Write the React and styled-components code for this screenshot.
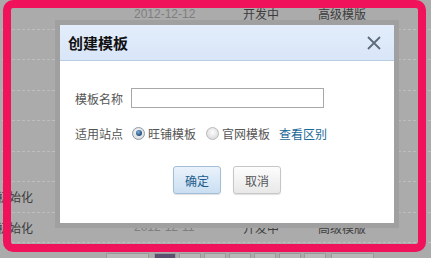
import styled, { createGlobalStyle } from "styled-components";

const GlobalStyle = createGlobalStyle`
  html, body {
    margin: 0;
    padding: 0;
    background: #ababab;
  }
`;

const Page = styled.div`
  position: relative;
  width: 431px;
  height: 258px;
  overflow: hidden;
  background: #ababab;
  font-family: "Liberation Sans", "Noto Sans CJK SC", sans-serif;
  font-size: 12px;
`;

const Table = styled.div`
  margin: -1px 0 0 -8px;
`;

const Row = styled.div`
  display: grid;
  grid-template-columns: 142px 109px 75px 1fr;
  align-items: center;
  height: 29.5px;
  border-bottom: 1px dashed #bebebe;
`;

const Cell = styled.span`
  color: ${({ $light }) => ($light ? "#7e7e7e" : "#3c3c3c")};
  padding-left: ${({ $name }) => ($name ? "5px" : "0")};
  white-space: nowrap;
`;

const Pager = styled.div`
  display: flex;
  gap: 3px;
  margin-top: 10px;
  padding-left: 106px;
`;

const PageItem = styled.span`
  box-sizing: border-box;
  width: ${({ $wide }) => ($wide ? "43px" : "22px")};
  height: 20px;
  border: 1px solid #999;
  background: ${({ $active }) => ($active ? "#5b506f" : "#b8b8b8")};
  margin-left: ${({ $gap }) => ($gap ? "2px" : "0")};
`;

const Mark = styled.div`
  position: absolute;
  left: 3px;
  top: 0;
  width: 423px;
  height: 252px;
  box-sizing: border-box;
  border: 8px solid #f0125a;
  border-radius: 10px;
  pointer-events: none;
`;

const Frame = styled.div`
  position: absolute;
  left: 55px;
  top: 20px;
  padding: 5px;
  background: #a0a0a0;
`;

const Dialog = styled.div`
  width: 334px;
  background: #fff;
  font-family: "Noto Sans CJK SC", "Liberation Sans", sans-serif;
`;

const Header = styled.div`
  display: flex;
  align-items: center;
  justify-content: space-between;
  height: 35px;
  padding: 0 13px 0 8px;
  background: linear-gradient(#e3edfb, #d9e6f8);
  border-bottom: 1px solid #b9cce6;
`;

const Title = styled.h3`
  margin: 0;
  font-size: 15px;
  font-weight: 700;
  color: #111;
`;

const Close = styled.button`
  display: flex;
  padding: 0;
  border: 0;
  background: none;
  cursor: pointer;
`;

const Body = styled.div`
  display: flex;
  flex-direction: column;
  gap: 15px;
  padding: 27px 15px 29px;
`;

const Field = styled.div`
  display: flex;
  align-items: center;
  height: 20px;
  color: #555;
`;

const Label = styled.span`
  width: 48px;
  margin-right: 8px;
  white-space: nowrap;
`;

const Input = styled.input`
  box-sizing: border-box;
  width: 193px;
  height: 20px;
  border: 1px solid #a8a8a8;
  padding: 0 4px;
  font-size: 12px;
  outline: none;
`;

const Option = styled.label`
  display: flex;
  align-items: center;
  gap: 3px;
  margin-right: 9px;
  white-space: nowrap;
`;

const Radio = styled.span`
  position: relative;
  box-sizing: border-box;
  width: 13px;
  height: 13px;
  margin-left: 1px;
  border-radius: 50%;
  border: 1px solid ${({ $checked }) => ($checked ? "#8a9bab" : "#b9b9b9")};
  background: radial-gradient(circle at 50% 40%, #fdfdfd, #d2d2d2);

  &::after {
    content: "";
    display: ${({ $checked }) => ($checked ? "block" : "none")};
    position: absolute;
    left: 2.5px;
    top: 2.5px;
    width: 6px;
    height: 6px;
    border-radius: 50%;
    background: radial-gradient(circle at 40% 35%, #7fb0dc, #1c4b78 70%);
  }
`;

const Link = styled.a`
  color: #1a6896;
  text-decoration: none;
  white-space: nowrap;
`;

const Actions = styled.div`
  display: flex;
  justify-content: center;
  gap: 12px;
  margin-top: 8px;
`;

const Button = styled.button`
  box-sizing: border-box;
  width: 48px;
  height: 28px;
  padding: 0;
  border-radius: 3px;
  font-family: "Noto Sans CJK SC", sans-serif;
  font-size: 12px;
  cursor: pointer;
  box-shadow: 0 1px 1px rgba(0, 0, 0, 0.12);
  border: 1px solid ${({ $primary }) => ($primary ? "#a2bdd6" : "#c6c6c6")};
  color: ${({ $primary }) => ($primary ? "#1d5c8c" : "#555")};
  background: ${({ $primary }) =>
    $primary
      ? "linear-gradient(#eaf2fb, #cadff2)"
      : "linear-gradient(#fdfdfd, #e8e8e8)"};
`;

const rows = [
  { date: "2012-12-12", status: "开发中", type: "高级模版" },
  {},
  {},
  {},
  {},
  {},
  { name: "初始化" },
  { name: "初始化", date: "2012-12-11", status: "开发中", type: "高级模版" },
];

const pages = [
  { wide: true },
  { active: true, gap: true },
  {},
  {},
  {},
  {},
  {},
  {},
  { wide: true, gap: true },
];

export default function App() {
  return (
    <Page>
      <GlobalStyle />
      <Table>
        {rows.map((r, i) => (
          <Row key={i}>
            <Cell $name>{r.name}</Cell>
            <Cell $light>{r.date}</Cell>
            <Cell>{r.status}</Cell>
            <Cell>{r.type}</Cell>
          </Row>
        ))}
      </Table>
      <Pager>
        {pages.map((p, i) => (
          <PageItem key={i} $wide={p.wide} $active={p.active} $gap={p.gap} />
        ))}
      </Pager>

      <Frame>
        <Dialog>
          <Header>
            <Title>创建模板</Title>
            <Close aria-label="关闭">
              <svg width="14" height="14" viewBox="0 0 14 14">
                <path
                  d="M1 1 L13 13 M13 1 L1 13"
                  stroke="#5c6b7b"
                  strokeWidth="1.8"
                  fill="none"
                />
              </svg>
            </Close>
          </Header>
          <Body>
            <Field>
              <Label>模板名称</Label>
              <Input />
            </Field>
            <Field>
              <Label>适用站点</Label>
              <Option>
                <Radio $checked />
                旺铺模板
              </Option>
              <Option>
                <Radio />
                官网模板
              </Option>
              <Link href="#">查看区别</Link>
            </Field>
            <Actions>
              <Button $primary>确定</Button>
              <Button>取消</Button>
            </Actions>
          </Body>
        </Dialog>
      </Frame>

      <Mark />
    </Page>
  );
}
